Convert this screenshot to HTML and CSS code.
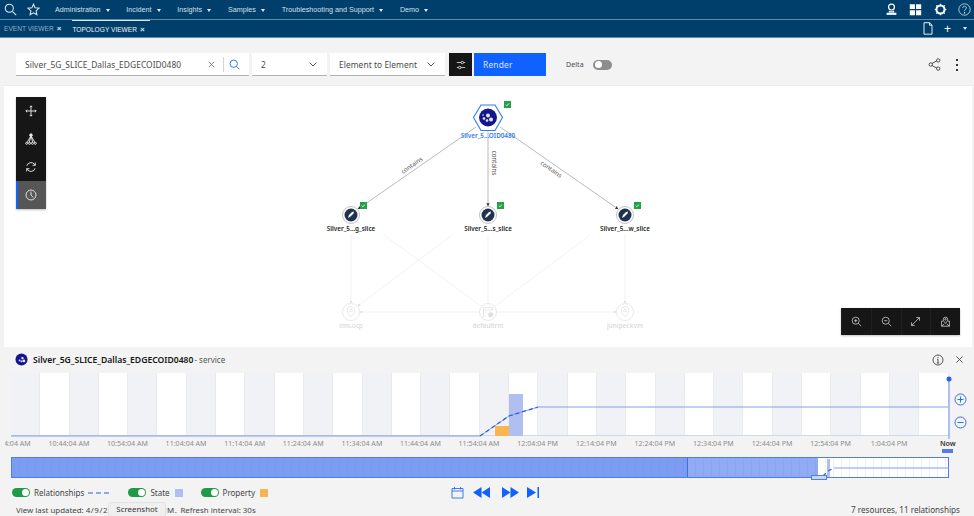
FILE: index.html
```html
<!DOCTYPE html>
<html lang="en">
<head>
<meta charset="utf-8">
<title>Topology Viewer</title>
<link rel="stylesheet" href="styles.css">
</head>
<body>
<header class="nav">
  <svg class="ico nav-search" viewBox="0 0 16 16"><circle cx="6.5" cy="6.5" r="5"/><path d="M10.2 10.2 15 15"/></svg>
  <svg class="ico nav-star" viewBox="0 0 16 16"><path d="M8 1.5 10 6l4.8.5-3.6 3.2 1 4.8L8 12l-4.2 2.5 1-4.8L1.200 6.500 6 6z"/></svg>
  <nav class="menu">
    <span class="menu-item">Administration<i class="caret"></i></span>
    <span class="menu-item">Incident<i class="caret"></i></span>
    <span class="menu-item">Insights<i class="caret"></i></span>
    <span class="menu-item">Samples<i class="caret"></i></span>
    <span class="menu-item">Troubleshooting and Support<i class="caret"></i></span>
    <span class="menu-item">Demo<i class="caret"></i></span>
  </nav>
  <div class="nav-right">
    <svg class="nav-icon" viewBox="0 0 16 16"><circle class="ln" cx="8" cy="5" r="3.600"/><path class="ln" d="M5.500 9.500v1.500h5V9.500"/><rect class="fl" x="2" y="12" width="12" height="2.600"/></svg>
    <svg class="nav-icon" viewBox="0 0 16 16"><path class="fl" d="M1 1.500h6.300v6H1zM8.700 1.500H15v6H8.700zM1 9h6.300v6H1zM8.700 9H15v6H8.700z"/></svg>
    <svg class="nav-icon" viewBox="0 0 16 16"><circle class="gear" cx="8" cy="8" r="5"/><path class="ln" d="M8 .8v2M8 13.200v2M.8 8h2M13.200 8h2M2.900 2.900l1.400 1.400M11.700 11.700l1.400 1.400M2.900 13.100l1.400-1.400M11.700 4.300l1.400-1.400"/></svg>
    <svg class="nav-icon" viewBox="0 0 16 16"><circle class="ln thin" cx="8" cy="8" r="7"/><path class="ln thin" d="M5.800 6.200C5.800 3.400 10.300 3.400 10.300 6.100 10.300 7.800 8 7.900 8 9.800"/><circle class="fl" cx="8" cy="12" r=".9"/></svg>
  </div>
</header>

<div class="tabs">
  <span class="tab">EVENT VIEWER<b class="tab-x">×</b></span>
  <span class="tab tab-active">TOPOLOGY VIEWER<b class="tab-x">×</b></span>
  <div class="tabs-right">
    <svg class="tab-doc" viewBox="0 0 10 13"><path d="M1 .7h5.500L9 3.200v9H1zM6.500.7v2.500H9"/></svg>
    <span class="tab-plus">+</span>
    <i class="caret tab-caret"></i>
  </div>
</div>

<section class="toolbar">
  <div class="field field-search">
    <span class="field-text">Silver_5G_SLICE_Dallas_EDGECOID0480</span>
    <svg class="clear" viewBox="0 0 8 8"><path d="M1 1l6 6M7 1 1 7"/></svg>
    <i class="field-sep"></i>
    <svg class="search-blue" viewBox="0 0 14 14"><circle cx="6" cy="6" r="4.700"/><path d="M9.400 9.400 13 13"/></svg>
  </div>
  <div class="field field-depth"><span class="field-text">2</span><svg class="chev" viewBox="0 0 8 5"><path d="M.7.700 4 4 7.300.700"/></svg></div>
  <div class="field field-type"><span class="field-text">Element to Element</span><svg class="chev" viewBox="0 0 8 5"><path d="M.7.700 4 4 7.300.700"/></svg></div>
  <button class="btn-filter"><svg viewBox="0 0 14 12"><path d="M2 3h10M2 9h10"/><circle cx="8.500" cy="3" r="1.500"/><circle cx="5.500" cy="9" r="1.500"/></svg></button>
  <button class="btn-render">Render</button>
  <span class="delta">Delta</span>
  <span class="switch-off"><i></i></span>
  <div class="toolbar-right">
    <svg class="share" viewBox="0 0 14 14"><path d="M4.200 6 9.600 3M4.200 8l5.400 3"/><circle cx="2.900" cy="7" r="1.800"/><circle cx="11" cy="2.600" r="1.800"/><circle cx="11" cy="11.400" r="1.800"/></svg>
    <span class="kebab"><i></i><i></i><i></i></span>
  </div>
</section>

<main class="canvas">
  <svg class="graph" viewBox="4 85 968 262">
    <defs>
      <marker id="arr" markerWidth="4" markerHeight="4" refX="3.500" refY="2" orient="auto"><path d="M0 0 4 2 0 4z" fill="#333"/></marker>
      <marker id="arrf" markerWidth="4" markerHeight="4" refX="3.500" refY="2" orient="auto"><path d="M0 0 4 2 0 4z" fill="#ddd"/></marker>
    </defs>
    <g class="edges-faint">
      <path d="M351 234V303" marker-end="url(#arrf)"/>
      <path d="M488 234V303"/>
      <path d="M625 234V303" marker-end="url(#arrf)"/>
      <path d="M384 235 481 306"/>
      <path d="M452 235 358 306" marker-end="url(#arrf)"/>
      <path d="M590 235 495 306"/>
      <path d="M479 312H360" marker-end="url(#arrf)"/>
      <path d="M497 312H616" marker-end="url(#arrf)"/>
    </g>
    <g class="edges">
      <path d="M476 127 358 209" marker-end="url(#arr)"/>
      <path d="M488 131V206" marker-end="url(#arr)"/>
      <path d="M500 127 618 209" marker-end="url(#arr)"/>
    </g>
    <text class="edge-label" transform="translate(413 167) rotate(-35)">contains</text>
    <text class="edge-label" transform="translate(492 163) rotate(90)">contains</text>
    <text class="edge-label" transform="translate(550 171) rotate(35)">contains</text>

    <path class="hex" d="M473.500 117.500 481 105H495L502.500 117.500 495 130.500H481z"/>
    <circle class="svc" cx="488" cy="117.500" r="9"/>
    <g class="svc-dots"><circle cx="484" cy="118.500" r="1.300"/><circle cx="488" cy="115.500" r="2"/><circle cx="491" cy="119.500" r="2"/><circle cx="487" cy="120.500" r="1.300"/><circle cx="483" cy="115" r=".8"/></g>
    <text class="node-label selected" x="488" y="138">Silver_5...OID0480</text>

    <g class="node">
      <circle class="ring" cx="351" cy="215" r="8.500"/><circle class="core" cx="351" cy="215" r="6.500"/><path class="rocket" d="M348 218l1-3 3-3 2-.5-.5 2-3 3z"/>
      <circle class="ring" cx="488" cy="215" r="8.500"/><circle class="core" cx="488" cy="215" r="6.500"/><path class="rocket" d="M485 218l1-3 3-3 2-.5-.5 2-3 3z"/>
      <circle class="ring" cx="625" cy="215" r="8.500"/><circle class="core" cx="625" cy="215" r="6.500"/><path class="rocket" d="M622 218l1-3 3-3 2-.5-.5 2-3 3z"/>
    </g>
    <text class="node-label" x="351" y="231">Silver_5...g_slice</text>
    <text class="node-label" x="488" y="231">Silver_5...s_slice</text>
    <text class="node-label" x="625" y="231">Silver_5...w_slice</text>

    <g class="badge">
      <rect x="504" y="101" width="7" height="7"/><path d="M505.700 104.700l1.200 1 2.200-2.200"/>
      <rect x="360" y="202" width="7" height="7"/><path d="M361.700 205.700l1.200 1 2.200-2.200"/>
      <rect x="497" y="202" width="7" height="7"/><path d="M498.700 205.700l1.200 1 2.200-2.200"/>
      <rect x="634" y="202" width="7" height="7"/><path d="M635.700 205.700l1.200 1 2.200-2.200"/>
    </g>

    <g class="faded">
      <circle cx="351" cy="312" r="8.500"/><path d="M351 317c-2-2.500-3.800-4.500-3.800-6.500a3.800 3.800 0 0 1 7.600 0c0 2-1.800 4-3.800 6.500z"/><circle cx="351" cy="310.500" r="1.400"/>
      <circle cx="625" cy="312" r="8.500"/><path d="M625 317c-2-2.500-3.800-4.500-3.800-6.500a3.800 3.800 0 0 1 7.600 0c0 2-1.800 4-3.800 6.500z"/><circle cx="625" cy="310.500" r="1.400"/>
      <circle cx="488" cy="312" r="8.500"/><path d="M485 316.500h-1.500v-9h9v3M483.500 310h9"/><circle class="faded-fill" cx="490.700" cy="314.700" r="2.300"/>
    </g>
    <text class="node-label faint" x="351" y="328">ims.ocp</text>
    <text class="node-label faint" x="488" y="328">defaultrm</text>
    <text class="node-label faint" x="625" y="328">juniper.kvm</text>
  </svg>

  <div class="tools">
    <span class="tool"><svg viewBox="0 0 14 14"><path d="M7 1v12M1 7h12M5.500 2.500 7 1l1.500 1.500M5.500 11.500 7 13l1.500-1.500M2.500 5.500 1 7l1.500 1.500M11.500 5.500 13 7l-1.500 1.500"/></svg></span>
    <span class="tool"><svg viewBox="0 0 14 14"><circle class="dot" cx="7" cy="2.500" r="1.500"/><path d="M7 3 2.500 11M7 3 5 11M7 3 9 11M7 3 11.500 11"/><circle cx="2" cy="12" r="1.200"/><circle cx="5.300" cy="12" r="1.200"/><circle cx="8.700" cy="12" r="1.200"/><circle cx="12" cy="12" r="1.200"/></svg></span>
    <span class="tool"><svg viewBox="0 0 14 14"><path d="M2.200 5.500A5 5 0 0 1 11 3.800l1 1.200M12 1.800V5H8.800M11.800 8.500A5 5 0 0 1 3 10.200L2 9M2 12.200V9h3.200"/></svg></span>
    <span class="tool tool-active"><svg viewBox="0 0 14 14"><circle cx="7" cy="7" r="5.800"/><path d="M7 3v4l2.500 2.800"/></svg></span>
  </div>

  <div class="zoom-bar">
    <span class="zoom-btn"><svg viewBox="0 0 14 14"><circle cx="6" cy="6" r="4.500"/><path d="M9.300 9.300 13 13M6 4v4M4 6h4"/></svg></span>
    <span class="zoom-btn"><svg viewBox="0 0 14 14"><circle cx="6" cy="6" r="4.500"/><path d="M9.300 9.300 13 13M4 6h4"/></svg></span>
    <span class="zoom-btn"><svg viewBox="0 0 14 14"><path d="M2 12 12 2M8 2h4v4M6 12H2V8"/></svg></span>
    <span class="zoom-btn"><svg viewBox="0 0 14 14"><path d="M4 6.500H2V13h10V6.500H10M2 13l3.500-3M12 13l-3.500-3"/><path d="M7 9.500C5.500 7.500 4.200 6 4.200 4.300a2.800 2.800 0 0 1 5.600 0C9.800 6 8.500 7.500 7 9.500z"/><circle cx="7" cy="4.300" r=".9"/></svg></span>
  </div>
</main>

<section class="details">
  <div class="detail-head">
    <svg class="head-icon" viewBox="0 0 14 14"><circle class="hc" cx="7" cy="7" r="6.500"/><circle cx="5" cy="8" r="1"/><circle cx="8" cy="5.500" r="1.300"/><circle cx="9.500" cy="8.500" r="1.500"/><circle cx="7" cy="9" r="1"/></svg>
    <strong class="head-title">Silver_5G_SLICE_Dallas_EDGECOID0480</strong><span class="head-sub">- service</span>
    <div class="head-right">
      <svg class="info" viewBox="0 0 12 12"><circle cx="6" cy="6" r="5"/><path d="M6 5.200V9M4.800 9h2.400M5 5.200h1"/><circle class="info-dot" cx="6" cy="3.300" r=".6"/></svg>
      <svg class="close" viewBox="0 0 10 10"><path d="M1.500 1.500l7 7M8.500 1.500l-7 7"/></svg>
    </div>
  </div>

  <div class="chart">
    <svg class="chart-data" viewBox="11 373 960 66">
      <rect class="bar-state" x="509" y="394" width="14" height="42"/>
      <rect class="bar-prop" x="495" y="426" width="14" height="10"/>
      <path class="rel" d="M11 436H480M480 436 509 416 538 407H948"/>
      <path class="rel-dash" d="M480 436 509 416 538 407"/>
      <path class="now" d="M949 379V439"/>
      <circle class="now-dot" cx="949" cy="379" r="2.500"/>
      <g class="zoom-ctl"><circle cx="960.500" cy="399.500" r="5.500"/><path d="M957.500 399.500h6M960.500 396.500v6"/><circle cx="960.500" cy="422.500" r="5.500"/><path d="M957.500 422.500h6"/></g>
    </svg>
  </div>

  <div class="ticks">
    <span class="tick tick-first">10:34:04 AM</span>
    <span class="tick">10:44:04 AM</span>
    <span class="tick">10:54:04 AM</span>
    <span class="tick">11:04:04 AM</span>
    <span class="tick">11:14:04 AM</span>
    <span class="tick">11:24:04 AM</span>
    <span class="tick">11:34:04 AM</span>
    <span class="tick">11:44:04 AM</span>
    <span class="tick">11:54:04 AM</span>
    <span class="tick">12:04:04 PM</span>
    <span class="tick">12:14:04 PM</span>
    <span class="tick">12:24:04 PM</span>
    <span class="tick">12:34:04 PM</span>
    <span class="tick">12:44:04 PM</span>
    <span class="tick">12:54:04 PM</span>
    <span class="tick">1:04:04 PM</span>
    <span class="tick tick-now">Now<i class="now-mark"></i></span>
  </div>

  <div class="mini">
    <div class="mini-past"></div>
    <div class="mini-window"></div>
    <div class="mini-live">
      <svg class="mini-data" viewBox="0 0 131 20"><rect class="bar-state" x="9" y="2" width="3" height="18"/><path class="rel" d="M16 11H131"/><path class="rel-dash" d="M5 19 10 14 16 11"/></svg>
    </div>
    <span class="mini-handle"></span>
  </div>

  <div class="legend">
    <span class="toggle"></span><span class="legend-label">Relationships</span>
    <svg class="dashes" viewBox="0 0 21 2"><path d="M0 1h5M8 1h5M16 1h5"/></svg>
    <span class="toggle toggle-gap"></span><span class="legend-label">State</span><i class="swatch swatch-state"></i>
    <span class="toggle toggle-gap2"></span><span class="legend-label">Property</span><i class="swatch swatch-prop"></i>
    <div class="player">
      <svg class="cal" viewBox="0 0 13 13"><path d="M1 2.500h11V12H1zM1 5h11M3.500 1v2.500M9.500 1v2.500"/></svg>
      <svg class="pl pl-back" viewBox="0 0 17 11"><path d="M8.500 0v11L0 5.500zM17 0v11L8.500 5.500z"/></svg>
      <svg class="pl pl-fwd" viewBox="0 0 17 11"><path d="M0 0v11l8.500-5.500zM8.500 0v11L17 5.500z"/></svg>
      <svg class="pl pl-end" viewBox="0 0 12 11"><path d="M0 0v11l9-5.500zM10.500 0H12v11h-1.500z"/></svg>
    </div>
  </div>

  <div class="status">
    <span>View last updated: <span class="status-time">4/9/2024, 1:05:04 PM.</span> Refresh interval: 30s</span>
    <span class="status-count">7 resources, 11 relationships</span>
    <span class="tip">Screenshot</span>
  </div>
</section>
</body>
</html>
```
FILE: styles.css
```css
* { box-sizing: border-box; }
html, body { margin: 0; padding: 0; }
body {
  width: 974px;
  height: 516px;
  overflow: hidden;
  display: flex;
  flex-direction: column;
  background: #f3f3f3;
  font-family: "Noto Sans", "Liberation Sans", sans-serif;
  color: #262626;
}
svg { display: block; }

/* top nav */
.nav {
  height: 20px;
  flex: none;
  display: flex;
  align-items: center;
  background: #003f6c;
  border-bottom: 1px solid #5f8cae;
  padding: 0 0 1px 4px;
  color: #d4e0ea;
  font-family: "Liberation Sans", sans-serif;
}
.ico { fill: none; stroke: #dfe9f1; stroke-width: 1.300; }
.nav-search { width: 13px; height: 13px; }
.nav-star { width: 13px; height: 13px; margin-left: 10px; }
.menu { display: flex; gap: 16.800px; margin-left: 15px; font-size: 7.200px; }
.menu-item { display: flex; align-items: center; white-space: nowrap; }
.caret {
  width: 0; height: 0;
  margin: 2px 0 0 5px;
  border-left: 2.800px solid transparent;
  border-right: 2.800px solid transparent;
  border-top: 3px solid #e2ebf2;
}
.nav-right { margin-left: auto; display: flex; gap: 11.500px; padding-right: 3px; }
.nav-icon { width: 13px; height: 13px; }
.nav-icon .ln { fill: none; stroke: #fff; stroke-width: 1.500; }
.nav-icon .thin { stroke: #d6e2ec; stroke-width: 1; }
.nav-icon .fl { fill: #fff; }
.nav-icon .gear { fill: none; stroke: #fff; stroke-width: 2.600; }

/* tabs */
.tabs {
  height: 18px;
  flex: none;
  display: flex;
  align-items: center;
  gap: 11px;
  padding-left: 4px;
  background: #003f6c;
  border-bottom: 1px solid #5f8cae;
  font-family: "Liberation Sans", sans-serif;
  font-size: 6.600px;
  color: #8fadc4;
}
.tab { height: 100%; display: flex; align-items: center; white-space: nowrap; }
.tab-active { color: #f0f5f9; border-top: 1px solid #dce6ee; padding-right: 5px; }
.tab-x { font-size: 8px; margin-left: 3px; color: #dfe9f1; }
.tabs-right { margin-left: auto; display: flex; align-items: center; }
.tab-doc { width: 10px; height: 13px; fill: none; stroke: #fff; stroke-width: .9; }
.tab-plus { color: #fff; font-size: 12px; margin-left: 11px; line-height: 12px; }
.tab-caret { margin: 0 7px 0 12px; }

/* toolbar */
.toolbar {
  height: 47px;
  flex: none;
  display: flex;
  align-items: center;
  padding: 6px 13px 0 16px;
  font-size: 8.400px;
  letter-spacing: .06px;
  color: #4a4a4a;
}
.field {
  height: 23px;
  display: flex;
  align-items: center;
  background: #fff;
  border-bottom: 1px solid #b4b4b4;
  margin-right: 3px;
  padding-left: 9px;
}
.field-search { width: 233px; }
.field-depth { width: 75px; }
.field-type { width: 115px; margin-right: 4px; }
.field-text { white-space: nowrap; }
.clear { width: 7px; height: 7px; margin-left: auto; fill: none; stroke: #666; stroke-width: .9; }
.field-sep { width: 1px; height: 15px; background: #d4d4d4; margin: 0 5px 0 8px; }
.search-blue { width: 11px; height: 11px; margin-right: 9px; fill: none; stroke: #2f6fe8; stroke-width: 1.200; }
.chev { width: 8px; height: 5px; margin: 0 10px 0 auto; fill: none; stroke: #555; stroke-width: 1; }
.btn-filter {
  width: 23px; height: 23px; padding: 0; border: 0; background: #161616;
  display: flex; align-items: center; justify-content: center; margin-right: 2px;
}
.btn-filter svg { width: 12px; height: 10px; fill: #161616; stroke: #e0e0e0; stroke-width: 1; }
.btn-render {
  width: 72px; height: 23px; padding: 0 0 0 9px; border: 0; text-align: left;
  background: #0f62fe; color: #dbe7ff; font: inherit; letter-spacing: .2px;
}
.delta { margin-left: 20px; font-size: 7px; }
.switch-off {
  width: 19px; height: 10px; margin-left: 9px; border-radius: 5px; background: #8d8d8d;
  display: flex; align-items: center; padding-left: 2px;
}
.switch-off i { width: 7px; height: 7px; border-radius: 50%; background: #fff; }
.toolbar-right { margin-left: auto; display: flex; align-items: center; gap: 15px; }
.share { width: 13px; height: 13px; fill: none; stroke: #333; stroke-width: .9; }
.kebab { display: flex; flex-direction: column; gap: 3px; padding-right: 3px; }
.kebab i { width: 2px; height: 2px; background: #333; }

/* canvas */
.canvas {
  position: relative;
  height: 262px;
  flex: none;
  margin: 0 2px 0 4px;
  background: #fff;
  border-top: 1px solid #ececec;
}
.graph { position: absolute; left: 0; top: -1px; width: 968px; height: 262px; }
.edges path { fill: none; stroke: #a8a8a8; stroke-width: .8; }
.edges-faint path { fill: none; stroke: #ececec; stroke-width: .7; }
.edge-label { font-size: 6.200px; fill: #555; text-anchor: middle; }
.hex { fill: #fff; stroke: #2f7bf5; stroke-width: 1.100; }
.svc { fill: #16168c; }
.svc-dots circle { fill: #dfe4ff; }
.node-label { font-size: 6.300px; font-weight: 600; fill: #222; text-anchor: middle; }
.node-label.selected { fill: #2f7bf5; }
.node-label.faint { fill: #dcdcdc; }
.ring { fill: #fff; stroke: #a6a6a6; stroke-width: .7; }
.core { fill: #1f3350; }
.rocket { fill: #fff; }
.badge rect { fill: #24a148; }
.badge path { fill: none; stroke: #fff; stroke-width: .8; }
.faded circle, .faded path { fill: #fff; stroke: #e2e2e2; stroke-width: .8; }
.faded .faded-fill { fill: #dedede; }

.tools {
  position: absolute; left: 12px; top: 11px; width: 30px;
  background: #161616; box-shadow: 0 1px 2px rgba(0,0,0,.25);
  display: flex; flex-direction: column;
}
.tool { height: 28px; display: flex; align-items: center; justify-content: center; }
.tool svg { width: 12px; height: 12px; fill: none; stroke: #e8e8e8; stroke-width: 1.100; }
.tool .dot { fill: #e8e8e8; }
.tool-active { background: #565656; border-left: 2px solid #0f62fe; padding-right: 2px; }
.zoom-bar {
  position: absolute; left: 837px; top: 222px; width: 119px; height: 27px;
  display: flex; background: #161616; box-shadow: 0 1px 2px rgba(0,0,0,.25);
}
.zoom-btn { flex: 1; display: flex; align-items: center; justify-content: center; border-left: 1px solid #1f1f1f; }
.zoom-btn svg { width: 11px; height: 11px; fill: none; stroke: #e4e4e4; stroke-width: .9; }

/* details */
.details { flex: 1; display: flex; flex-direction: column; position: relative; min-height: 0; }
.detail-head {
  height: 26px; flex: none; display: flex; align-items: center;
  padding: 0 8px 1px 15px; font-size: 8.600px;
}
.head-icon { width: 13px; height: 13px; margin-right: 5px; fill: #e6eaff; }
.head-icon .hc { fill: #16168c; }
.head-title { font-weight: 600; color: #161616; white-space: nowrap; }
.head-sub { color: #555; font-size: 8px; margin-left: 1px; }
.head-right { margin-left: auto; display: flex; align-items: center; gap: 11px; }
.info { width: 12px; height: 12px; fill: none; stroke: #444; stroke-width: .9; }
.info .info-dot { fill: #444; stroke: none; }
.close { width: 9px; height: 9px; fill: none; stroke: #444; stroke-width: 1; margin-right: 2px; }

.chart {
  position: relative; height: 63px; flex: none; margin-left: 11px; width: 938px;
  background: repeating-linear-gradient(90deg,
    #f1f2f6 0, #f1f2f6 28.300px, #e9eaee 28.300px, #e9eaee 29.300px,
    #fff 29.300px, #fff 57.600px, #e9eaee 57.600px, #e9eaee 58.600px);
  border-bottom: 1px solid #cfd8f0;
}
.chart-data { position: absolute; left: 0; top: 0; width: 960px; height: 66px; overflow: visible; }
.bar-state { fill: #b0bff0; }
.bar-prop { fill: #f9b64f; }
.rel { fill: none; stroke: #7f9ff2; stroke-width: 1; }
.rel-dash { fill: none; stroke: #2e5fe6; stroke-width: 1.300; stroke-dasharray: 4 3; }
.now { stroke: #7f9ff2; stroke-width: 1.200; }
.now-dot { fill: #2563e8; }
.zoom-ctl circle, .zoom-ctl path { fill: none; stroke: #2f6fe8; stroke-width: 1; }

.ticks {
  height: 21px; flex: none; margin-left: 5px; padding-left: 5.300px; padding-top: 2px;
  display: flex; width: 969px;
  font-size: 7.100px; color: #8d8d8d; position: relative; z-index: 1; clip-path: inset(0 -10px 0 0);
}
.tick { flex: none; width: 58.600px; text-align: center; white-space: nowrap; }
.tick-first { margin-left: -29.300px; }
.tick-now { color: #333; font-weight: 600; display: flex; flex-direction: column; align-items: center; }
.now-mark { width: 11px; height: 4px; margin-top: 1px; background: #4f7df0; display: block; }

.mini {
  position: relative; height: 21px; flex: none; margin-left: 11px; width: 938px;
  display: flex; border: 1px solid #4f7df0; background: #fff;
}
.mini-past {
  width: 676px; border-right: 1px solid #3f6fe6;
  background: repeating-linear-gradient(90deg, #7c9cf1 0, #7c9cf1 7px, #7698ef 7px, #7698ef 8px);
}
.mini-window {
  width: 130px;
  background: repeating-linear-gradient(90deg, #8fabf3 0, #8fabf3 7px, #89a6f2 7px, #89a6f2 8px);
}
.mini-live {
  flex: 1; position: relative;
  background: repeating-linear-gradient(90deg, #fff 0, #fff 7px, #f0f0f4 7px, #f0f0f4 8px);
}
.mini-data { position: absolute; left: 0; top: -1px; width: 131px; height: 20px; }
.mini-handle {
  position: absolute; left: 799px; bottom: -3px; width: 16px; height: 5px;
  background: #c9d6f8; border: 1px solid #4f7df0;
}

.legend {
  height: 15px; flex: none; margin-top: 7px; padding-left: 12px;
  display: flex; align-items: center; font-size: 8px; color: #444; position: relative;
}
.toggle {
  width: 18px; height: 9px; border-radius: 5px; background: #1f9a48;
  margin-right: 4px; position: relative; flex: none;
}
.toggle::after {
  content: ""; position: absolute; right: 1px; top: 1px; width: 7px; height: 7px;
  border-radius: 50%; background: #fff;
}
.toggle-gap { margin-left: 19px; }
.toggle-gap2 { margin-left: 18px; }
.dashes { width: 21px; height: 2px; margin-left: 4px; fill: none; stroke: #2563e8; stroke-width: 1.200; }
.swatch { width: 8px; height: 8px; margin-left: 5px; }
.swatch-state { background: #b0bff0; }
.swatch-prop { background: #f9b64f; }
.player { position: absolute; left: 451px; top: 1px; display: flex; align-items: center; }
.cal { width: 13px; height: 13px; fill: none; stroke: #2f6fe8; stroke-width: .9; }
.pl { fill: #0f62fe; height: 11px; }
.pl-back { width: 17px; margin-left: 9px; }
.pl-fwd { width: 17px; margin-left: 12px; }
.pl-end { width: 12px; margin-left: 8px; }

.status {
  flex: 1; display: flex; justify-content: space-between; align-items: flex-end;
  padding: 0 14px 1px 16px; font-size: 7.900px; color: #444; position: relative;
}
.status-time { margin-right: 1px; letter-spacing: .55px; }
.status-count { font-size: 8.150px; }
.tip {
  position: absolute; left: 108px; bottom: -2px; width: 58px; height: 16px;
  background: #efefef; border: 1px solid #e2e2e2; border-radius: 3px 3px 0 0;
  text-align: center; line-height: 13px; color: #333;
}
```
